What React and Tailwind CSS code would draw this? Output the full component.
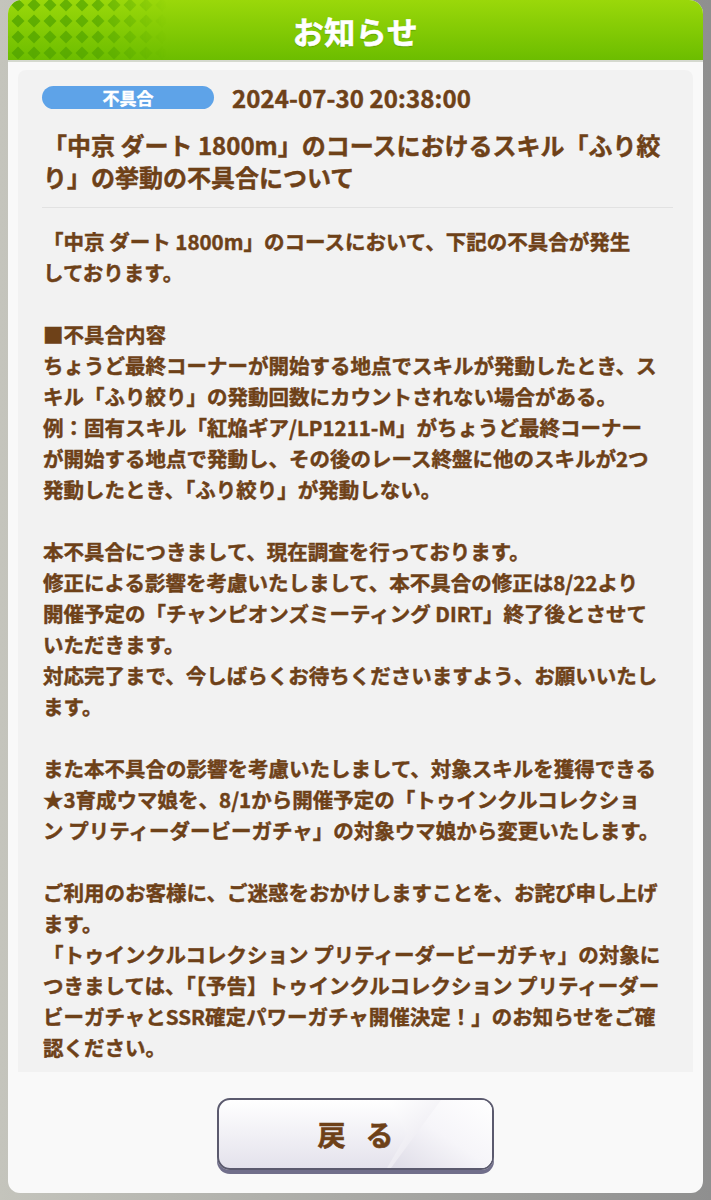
import React from "react";

const lines = [
  "「中京 ダート 1800m」のコースにおいて、下記の不具合が発生",
  "しております。",
  "",
  "■不具合内容",
  "ちょうど最終コーナーが開始する地点でスキルが発動したとき、ス",
  "キル「ふり絞り」の発動回数にカウントされない場合がある。",
  "例：固有スキル「紅焔ギア/LP1211-M」がちょうど最終コーナー",
  "が開始する地点で発動し、その後のレース終盤に他のスキルが2つ",
  "発動したとき、「ふり絞り」が発動しない。",
  "",
  "本不具合につきまして、現在調査を行っております。",
  "修正による影響を考慮いたしまして、本不具合の修正は8/22より",
  "開催予定の「チャンピオンズミーティング DIRT」終了後とさせて",
  "いただきます。",
  "対応完了まで、今しばらくお待ちくださいますよう、お願いいたし",
  "ます。",
  "",
  "また本不具合の影響を考慮いたしまして、対象スキルを獲得できる",
  "★3育成ウマ娘を、8/1から開催予定の「トゥインクルコレクショ",
  "ン プリティーダービーガチャ」の対象ウマ娘から変更いたします。",
  "",
  "ご利用のお客様に、ご迷惑をおかけしますことを、お詫び申し上げ",
  "ます。",
  "「トゥインクルコレクション プリティーダービーガチャ」の対象に",
  "つきましては、「【予告】トゥインクルコレクション プリティーダー",
  "ビーガチャとSSR確定パワーガチャ開催決定！」のお知らせをご確",
  "認ください。",
];

function HeaderPattern() {
  return (
    <svg width="220" height="60" viewBox="0 0 220 60" className="absolute left-0 top-0">
      <defs>
        <pattern id="dia" x="2" y="-3" width="16" height="16" patternUnits="userSpaceOnUse">
          <polygon points="8,1.5 14.5,8 8,14.5 1.5,8" fill="#52a400" />
        </pattern>
        <linearGradient id="fade" x1="0" y1="0" x2="1" y2="0">
          <stop offset="0" stopColor="#fff" stopOpacity="1" />
          <stop offset="0.4" stopColor="#fff" stopOpacity="0.85" />
          <stop offset="0.72" stopColor="#fff" stopOpacity="0" />
        </linearGradient>
        <mask id="m">
          <rect width="220" height="60" fill="url(#fade)" />
        </mask>
      </defs>
      <rect width="220" height="60" fill="url(#dia)" mask="url(#m)" opacity="0.8" />
    </svg>
  );
}

export default function App() {
  const font = { fontFamily: '"Noto Sans CJK JP", "Noto Sans", sans-serif' };
  return (
    <div
      className="w-[711px] h-[1200px] overflow-hidden bg-gradient-to-r from-[#c4c4bc] to-[#8f8f8f] px-[8px] pb-[7px]"
      style={font}
    >
      <div className="h-full flex flex-col rounded-t-[14px] rounded-b-[12px] overflow-hidden bg-[#f9f9f9]">
        <div className="relative h-[60px] shrink-0 bg-gradient-to-b from-[#9ad80a] to-[#6cbd00] flex items-center justify-center">
          <HeaderPattern />
          <span className="relative text-white font-bold text-[31px] leading-none tracking-[0.5px] [-webkit-text-stroke:0.6px_#ffffff] [text-shadow:0_1px_1px_rgba(40,90,0,0.45)]">
            お知らせ
          </span>
        </div>
        <div className="h-[2px] shrink-0 bg-[#d5d9cf]" />
        <div className="flex-1 flex flex-col px-[10px] pt-[8px]">
          <div className="h-[1002px] shrink-0 overflow-hidden rounded-t-[8px] bg-[#f2f2f2] pl-[24px] pr-[20px] pt-[16px] text-[#6e4118] [-webkit-text-stroke:0.45px_#6e4118]">
            <div className="flex items-center h-[23px]">
              <div className="w-[172px] h-[23px] rounded-full bg-[#5ea3e8] flex items-center justify-center text-white font-bold text-[17px] leading-none [-webkit-text-stroke:0.4px_#ffffff]">
                不具合
              </div>
              <div className="ml-[18px] font-bold text-[24px] leading-none tracking-[0.1px]">
                2024-07-30 20:38:00
              </div>
            </div>
            <div className="mt-[20px] font-bold text-[24px] leading-[32px] pl-[1px]">
              <div className="whitespace-nowrap">「中京 ダート 1800m」のコースにおけるスキル「ふり絞</div>
              <div className="whitespace-nowrap">り」の挙動の不具合について</div>
            </div>
            <div className="mt-[14px] h-[1px] bg-[#e2e2e2] w-[631px]" />
            <div className="mt-[18px] font-bold text-[20.5px] leading-[31px] pl-[1px]">
              {lines.map((l, i) => (
                <div key={i} className="whitespace-nowrap h-[31px]">
                  {l}
                </div>
              ))}
            </div>
          </div>
          <div className="flex justify-center pt-[26px]">
            <div className="relative w-[277px] h-[72px] rounded-[13px] border-2 border-[#5b5a6e] bg-gradient-to-b from-[#ffffff] to-[#e4e2ec] shadow-[0_4px_0_#716f8b] overflow-hidden flex items-center justify-center">
              <svg className="absolute inset-0" width="273" height="68" viewBox="0 0 273 68" preserveAspectRatio="none">
                <defs>
                  <linearGradient id="bg2" x1="0" y1="0" x2="1" y2="1">
                    <stop offset="0" stopColor="#ffffff" />
                    <stop offset="0.6" stopColor="#e9e7ef" />
                    <stop offset="1" stopColor="#ffffff" />
                  </linearGradient>
                  <linearGradient id="bg3" x1="1" y1="0" x2="0" y2="1">
                    <stop offset="0" stopColor="#ffffff" />
                    <stop offset="0.5" stopColor="#f6f5f9" />
                    <stop offset="1" stopColor="#dedce7" />
                  </linearGradient>
                </defs>
                <polygon points="168,0 273,0 273,68 168,68 188,34" fill="url(#bg2)" />
                <polygon points="222,0 273,0 273,68 172,68" fill="url(#bg3)" />
              </svg>
              <span className="relative font-bold text-[28px] leading-none text-[#6e4118] tracking-[20px] pl-[20px] [-webkit-text-stroke:0.6px_#6e4118]">
                戻る
              </span>
            </div>
          </div>
        </div>
      </div>
    </div>
  );
}
